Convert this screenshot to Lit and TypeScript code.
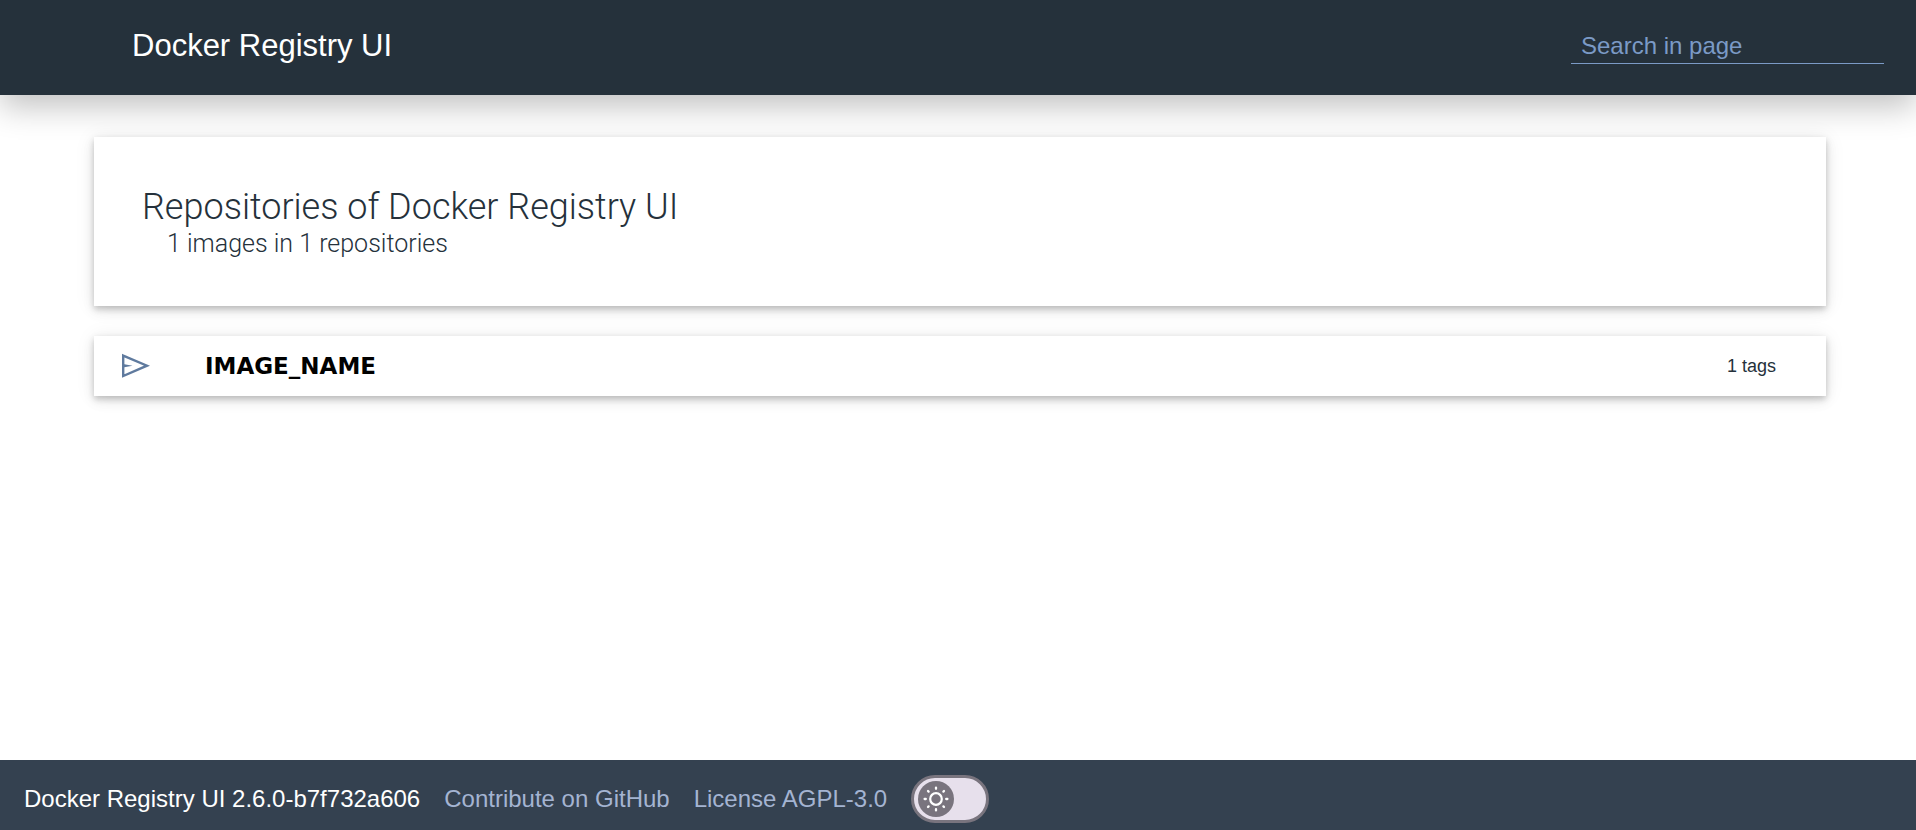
import { LitElement, html, css } from "lit";
import { customElement, property, state } from "lit/decorators.js";

@customElement("registry-header")
class RegistryHeader extends LitElement {
  static styles = css`
    :host {
      display: block;
      position: relative;
    }
    .bar {
      display: flex;
      align-items: center;
      justify-content: space-between;
      box-sizing: border-box;
      height: 95px;
      padding: 0 32px 3px 132px;
      background: #25313b;
      color: #fff;
      box-shadow: 0 12px 30px rgba(0, 0, 0, 0.24);
    }
    .title {
      margin: 0;
      font-size: 31px;
      font-weight: 400;
      line-height: 40px;
    }
    .search {
      box-sizing: border-box;
      width: 313px;
      height: 36px;
      padding: 0 10px;
      border: 0;
      border-bottom: 1px solid #7b9ac6;
      border-radius: 0;
      outline: none;
      background: transparent;
      color: #7b9ac6;
      font: inherit;
      font-size: 24px;
    }
    .search::placeholder {
      color: #7b9ac6;
      opacity: 1;
    }
  `;

  render() {
    return html`
      <header class="bar">
        <h1 class="title">Docker Registry UI</h1>
        <input class="search" type="text" aria-label="Search in page" placeholder="Search in page" />
      </header>
    `;
  }
}

@customElement("repository-row")
class RepositoryRow extends LitElement {
  @property() name = "";
  @property({ type: Number }) tags = 0;

  static styles = css`
    :host {
      display: block;
    }
    .row {
      display: flex;
      align-items: center;
      height: 60px;
      padding: 0 50px 0 26px;
      color: #25313b;
      text-decoration: none;
    }
    .icon {
      flex: none;
      width: 30px;
      height: 30px;
      margin-right: 55px;
    }
    .name {
      flex: 1;
      color: #000;
      font-family: Verdana, "DejaVu Sans", sans-serif;
      font-size: 23px;
      font-weight: 700;
      line-height: 30px;
    }
    .tags {
      font-size: 18px;
      line-height: 24px;
    }
  `;

  render() {
    return html`
      <a class="row" href="#">
        <svg class="icon" viewBox="0 0 30 30" aria-hidden="true">
          <path d="M3.2 4.6 27 14.7 3.2 25Z" fill="none" stroke="#5f7a9e" stroke-width="2.4" stroke-linejoin="miter" />
          <path d="M3 13 12.5 14.7 3 16.4Z" fill="#5f7a9e" />
        </svg>
        <span class="name">${this.name}</span>
        <span class="tags">${this.tags} tags</span>
      </a>
    `;
  }
}

@customElement("theme-switch")
class ThemeSwitch extends LitElement {
  @state() private dark = false;

  static styles = css`
    :host {
      display: block;
    }
    .track {
      display: flex;
      align-items: center;
      box-sizing: border-box;
      width: 78px;
      height: 48px;
      padding: 0 4px;
      border: 3px solid #79747e;
      border-radius: 24px;
      background: #e7e0ec;
      cursor: pointer;
    }
    .track.dark {
      justify-content: flex-end;
    }
    .thumb {
      display: block;
      width: 36px;
      height: 36px;
    }
  `;

  render() {
    return html`
      <button
        class="track ${this.dark ? "dark" : ""}"
        type="button"
        role="switch"
        aria-label="Dark theme"
        aria-checked=${this.dark ? "true" : "false"}
        @click=${() => (this.dark = !this.dark)}
      >
        <svg class="thumb" viewBox="-18 -18 36 36" aria-hidden="true">
          <circle r="18" fill="#79747e" />
          <circle r="5.8" fill="none" stroke="#fff" stroke-width="2.2" />
          <path
            d="M0-11.4V-10.2M0 11.4V10.2M-11.4 0H-10.2M11.4 0H10.2M-8-8-7.4-7.4M8-8 7.4-7.4M-8 8-7.4 7.4M8 8 7.4 7.4"
            stroke="#fff"
            stroke-width="2.3"
            stroke-linecap="round"
          />
        </svg>
      </button>
    `;
  }
}

@customElement("registry-footer")
class RegistryFooter extends LitElement {
  static styles = css`
    :host {
      display: block;
    }
    .bar {
      display: flex;
      align-items: center;
      gap: 24px;
      padding: 15px 24px 7px;
      background: #344150;
      color: #fff;
      font-size: 24px;
      line-height: 32px;
    }
    .link {
      color: #a4b4d2;
      text-decoration: none;
    }
  `;

  render() {
    return html`
      <footer class="bar">
        <span>Docker Registry UI 2.6.0-b7f732a606</span>
        <a class="link" href="#">Contribute on GitHub</a>
        <a class="link" href="#">License AGPL-3.0</a>
        <theme-switch></theme-switch>
      </footer>
    `;
  }
}

@customElement("app-root")
class AppRoot extends LitElement {
  private repositories = [{ name: "IMAGE_NAME", tags: 1 }];

  static styles = css`
    :host {
      display: flex;
      flex-direction: column;
      min-height: 100vh;
      background: #fff;
      font-family: "Liberation Sans", Arial, sans-serif;
    }
    .content {
      flex: 1;
      display: flex;
      flex-direction: column;
      gap: 30px;
      padding: 42px 90px 42px 94px;
    }
    .card {
      position: relative;
      background: #fff;
      box-shadow:
        0 3px 6px rgba(0, 0, 0, 0.18),
        0 5px 12px rgba(0, 0, 0, 0.08),
        0 1px 20px rgba(0, 0, 0, 0.08);
    }
    .summary {
      padding: 49px 48px 47px;
      color: #25313b;
      font-family: Roboto, sans-serif;
      font-weight: 300;
    }
    .heading {
      margin: 0;
      font-size: 36px;
      font-weight: 300;
      line-height: 43px;
    }
    .count {
      margin: 0;
      padding-left: 25px;
      font-size: 25px;
      line-height: 30px;
    }
  `;

  render() {
    return html`
      <registry-header></registry-header>
      <main class="content">
        <section class="card summary">
          <h2 class="heading">Repositories of Docker Registry UI</h2>
          <p class="count">1 images in ${this.repositories.length} repositories</p>
        </section>
        ${this.repositories.map(
          (r) => html`<repository-row class="card" name=${r.name} tags=${r.tags}></repository-row>`
        )}
      </main>
      <registry-footer></registry-footer>
    `;
  }
}
